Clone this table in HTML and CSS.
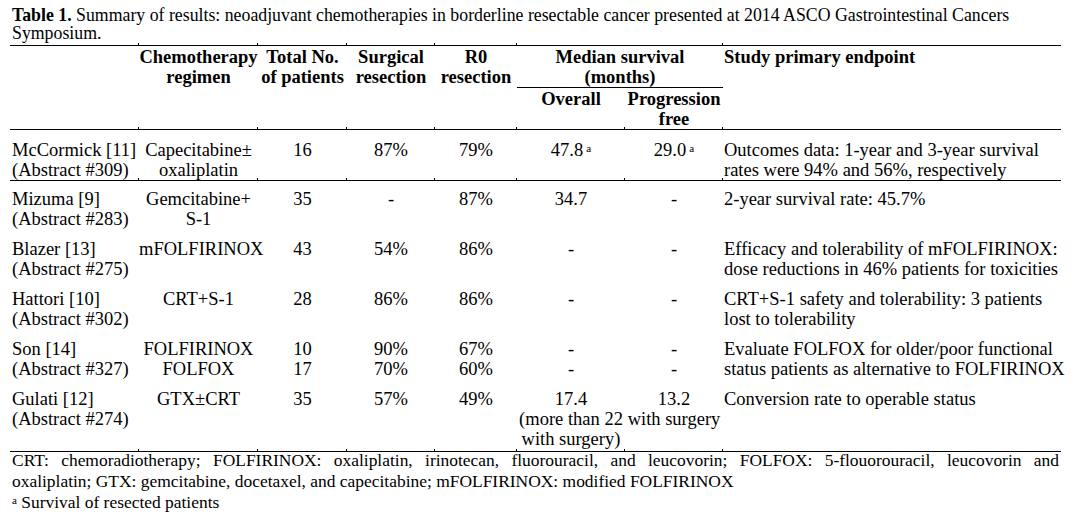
FILE: index.html
```html
<!DOCTYPE html>
<html lang="en">
<head>
<meta charset="utf-8">
<title>Table 1</title>
<link rel="stylesheet" href="styles.css">
</head>
<body>
<table class="results">
  <caption class="cap"><b>Table 1.</b> Summary of results: neoadjuvant chemotherapies in borderline resectable cancer presented at 2014 ASCO Gastrointestinal Cancers<br>Symposium.</caption>
  <colgroup>
    <col class="w-study">
    <col class="w-regimen">
    <col class="w-total">
    <col class="w-surg">
    <col class="w-r0">
    <col class="w-overall">
    <col class="w-pfs">
    <col class="w-end">
  </colgroup>
  <thead>
    <tr class="h1">
      <th rowspan="2" class="tk"></th>
      <th rowspan="2" class="tk">Chemotherapy<br>regimen</th>
      <th rowspan="2" class="tk">Total No.<br>of patients</th>
      <th rowspan="2" class="tk">Surgical<br>resection</th>
      <th rowspan="2" class="tk">R0<br>resection</th>
      <th colspan="2" class="median">Median survival<br>(months)</th>
      <th rowspan="2" class="endpoint">Study primary endpoint</th>
    </tr>
    <tr class="h2">
      <th class="tk">Overall</th>
      <th class="tk">Progression<br>free</th>
    </tr>
  </thead>
  <tbody>
    <tr class="first ruled">
      <td class="name tk">McCormick [11]<br>(Abstract #309)</td>
      <td class="tk">Capecitabine±<br>oxaliplatin</td>
      <td class="tk">16</td>
      <td class="tk">87%</td>
      <td class="tk">79%</td>
      <td class="tk">47.8<sup class="fn sup-gap">a</sup></td>
      <td class="tk">29.0<sup class="fn sup-gap">a</sup></td>
      <td class="ep">Outcomes data: 1-year and 3-year survival<br>rates were 94% and 56%, respectively</td>
    </tr>
    <tr>
      <td class="name">Mizuma [9]<br>(Abstract #283)</td>
      <td>Gemcitabine+<br>S-1</td>
      <td>35</td>
      <td>-</td>
      <td>87%</td>
      <td>34.7</td>
      <td>-</td>
      <td class="ep">2-year survival rate: 45.7%</td>
    </tr>
    <tr>
      <td class="name">Blazer [13]<br>(Abstract #275)</td>
      <td>mFOLFIRINOX</td>
      <td>43</td>
      <td>54%</td>
      <td>86%</td>
      <td>-</td>
      <td>-</td>
      <td class="ep">Efficacy and tolerability of mFOLFIRINOX:<br>dose reductions in 46% patients for toxicities</td>
    </tr>
    <tr>
      <td class="name">Hattori [10]<br>(Abstract #302)</td>
      <td>CRT+S-1</td>
      <td>28</td>
      <td>86%</td>
      <td>86%</td>
      <td>-</td>
      <td>-</td>
      <td class="ep">CRT+S-1 safety and tolerability: 3 patients<br>lost to tolerability</td>
    </tr>
    <tr>
      <td class="name">Son [14]<br>(Abstract #327)</td>
      <td>FOLFIRINOX<br>FOLFOX</td>
      <td>10<br>17</td>
      <td>90%<br>70%</td>
      <td>67%<br>60%</td>
      <td>-<br>-</td>
      <td>-<br>-</td>
      <td class="ep">Evaluate FOLFOX for older/poor functional<br>status patients as alternative to FOLFIRINOX</td>
    </tr>
    <tr class="ruled">
      <td class="name tk">Gulati [12]<br>(Abstract #274)</td>
      <td class="tk">GTX±CRT</td>
      <td class="tk">35</td>
      <td class="tk">57%</td>
      <td class="tk">49%</td>
      <td class="tk">17.4<br>(more than 22<br>with surgery)</td>
      <td class="tk">13.2<br>with surgery</td>
      <td class="ep">Conversion rate to operable status</td>
    </tr>
  </tbody>
</table>
<div class="notes">
  <span class="just">CRT: chemoradiotherapy; FOLFIRINOX: oxaliplatin, irinotecan, fluorouracil, and leucovorin; FOLFOX: 5-flouorouracil, leucovorin and</span>
  <span class="line">oxaliplatin; GTX: gemcitabine, docetaxel, and capecitabine; mFOLFIRINOX: modified FOLFIRINOX</span>
  <span class="line"><sup class="fn">a</sup> Survival of resected patients</span>
</div>
</body>
</html>
```
FILE: styles.css
```css
html, body {
  margin: 0;
  padding: 0;
  background: #ffffff;
  color: #000000;
}

body {
  font-family: "Liberation Serif", "Times New Roman", serif;
}

.results {
  margin-left: 10px;
  width: 1051px;
  table-layout: fixed;
  border-collapse: separate;
  border-spacing: 0;
  font-size: 18.5px;
  line-height: 20px;
}

.cap {
  text-align: left;
  font-size: 17.8px;
  line-height: 18px;
  padding: 6px 0 3px 2px;
  white-space: nowrap;
}

.cap b {
  font-weight: bold;
}

.w-study { width: 129px; }
.w-regimen { width: 119px; }
.w-total { width: 89px; }
.w-surg { width: 88px; }
.w-r0 { width: 82px; }
.w-overall { width: 108px; }
.w-pfs { width: 98px; }
.w-end { width: 338px; }

.results th,
.results td {
  vertical-align: top;
  text-align: center;
  white-space: nowrap;
  padding: 8px 0 2px 0;
}

.results th {
  font-weight: bold;
  padding: 1px 0 0 0;
  position: relative;
}

.results .h1 th {
  border-top: 1px solid #000;
}

.results .h1 th[rowspan],
.results .h2 th {
  border-bottom: 1px solid #000;
}

.results .median {
  border-bottom: 1px solid #000;
}

.results .endpoint {
  text-align: left;
  padding-left: 1px;
}

.results .h1 th.tk::before,
.results .h1 th.median::before {
  content: "";
  position: absolute;
  top: -3px;
  right: 0;
  width: 1px;
  height: 2px;
  background: #000;
}

.results .tk {
  background-image: linear-gradient(#000, #000);
  background-repeat: no-repeat;
  background-size: 1px 2px;
  background-position: right bottom;
  background-origin: padding-box;
}

.results .first td {
  padding-top: 10px;
  padding-bottom: 0;
}

.results .ruled td {
  border-bottom: 1px solid #000;
}

.results .name {
  text-align: left;
  padding-left: 2px;
}

.results .ep {
  text-align: left;
  padding-left: 1px;
}

.fn {
  font-size: 11px;
  line-height: 0;
  vertical-align: 4px;
}

.sup-gap {
  margin-left: 3px;
}

.notes {
  margin: 0 12px 0 12px;
  width: 1047px;
  font-size: 17.45px;
  line-height: 21px;
}

.notes .just {
  display: block;
  text-align: justify;
  text-align-last: justify;
  margin-top: -2px;
}

.notes .line {
  display: block;
  white-space: nowrap;
}
```
